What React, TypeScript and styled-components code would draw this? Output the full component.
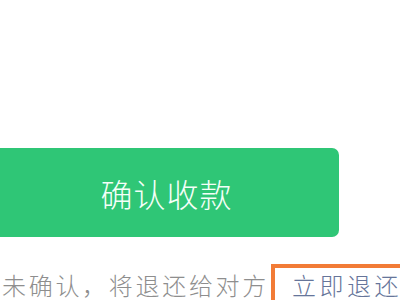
import React from "react";
import styled, { createGlobalStyle } from "styled-components";

const Global = createGlobalStyle`
  html, body {
    margin: 0;
    padding: 0;
    background: #ffffff;
  }
  body {
    width: 400px;
    height: 300px;
    overflow: hidden;
    font-family: "Noto Sans CJK SC", "Noto Sans", sans-serif;
  }
`;

const Page = styled.div`
  width: 400px;
  height: 300px;
  overflow: hidden;
  padding-top: 148px;
  box-sizing: border-box;
  background: #ffffff;
`;

const ConfirmButton = styled.button`
  display: flex;
  align-items: center;
  justify-content: center;
  margin-left: -8px;
  width: 347px;
  height: 89px;
  border: none;
  border-radius: 7px;
  background: #2fc676;
  color: #f4fff8;
  font-family: "Noto Sans CJK SC", sans-serif;
  font-size: 32px;
  font-weight: 300;
  letter-spacing: 1px;
  padding: 0 0 0 2px;
`;

const InfoRow = styled.div`
  display: flex;
  align-items: flex-start;
  margin-top: 27px;
  padding-left: 2px;
  white-space: nowrap;
`;

const Hint = styled.span`
  font-size: 24px;
  font-weight: 300;
  line-height: 30px;
  letter-spacing: 2.7px;
  color: #8e8e8e;
  padding-top: 6px;
`;

const ReturnLink = styled.span`
  margin-left: 2px;
  border: 4px solid #f27b36;
  padding: 2px 0 10px 17px;
  font-size: 24px;
  font-weight: 300;
  line-height: 30px;
  letter-spacing: 3.5px;
  color: #66759a;
  min-width: 160px;
`;

export default function App() {
  return (
    <>
      <Global />
      <Page>
        <ConfirmButton>确认收款</ConfirmButton>
        <InfoRow>
          <Hint>未确认，将退还给对方</Hint>
          <ReturnLink>立即退还</ReturnLink>
        </InfoRow>
      </Page>
    </>
  );
}
